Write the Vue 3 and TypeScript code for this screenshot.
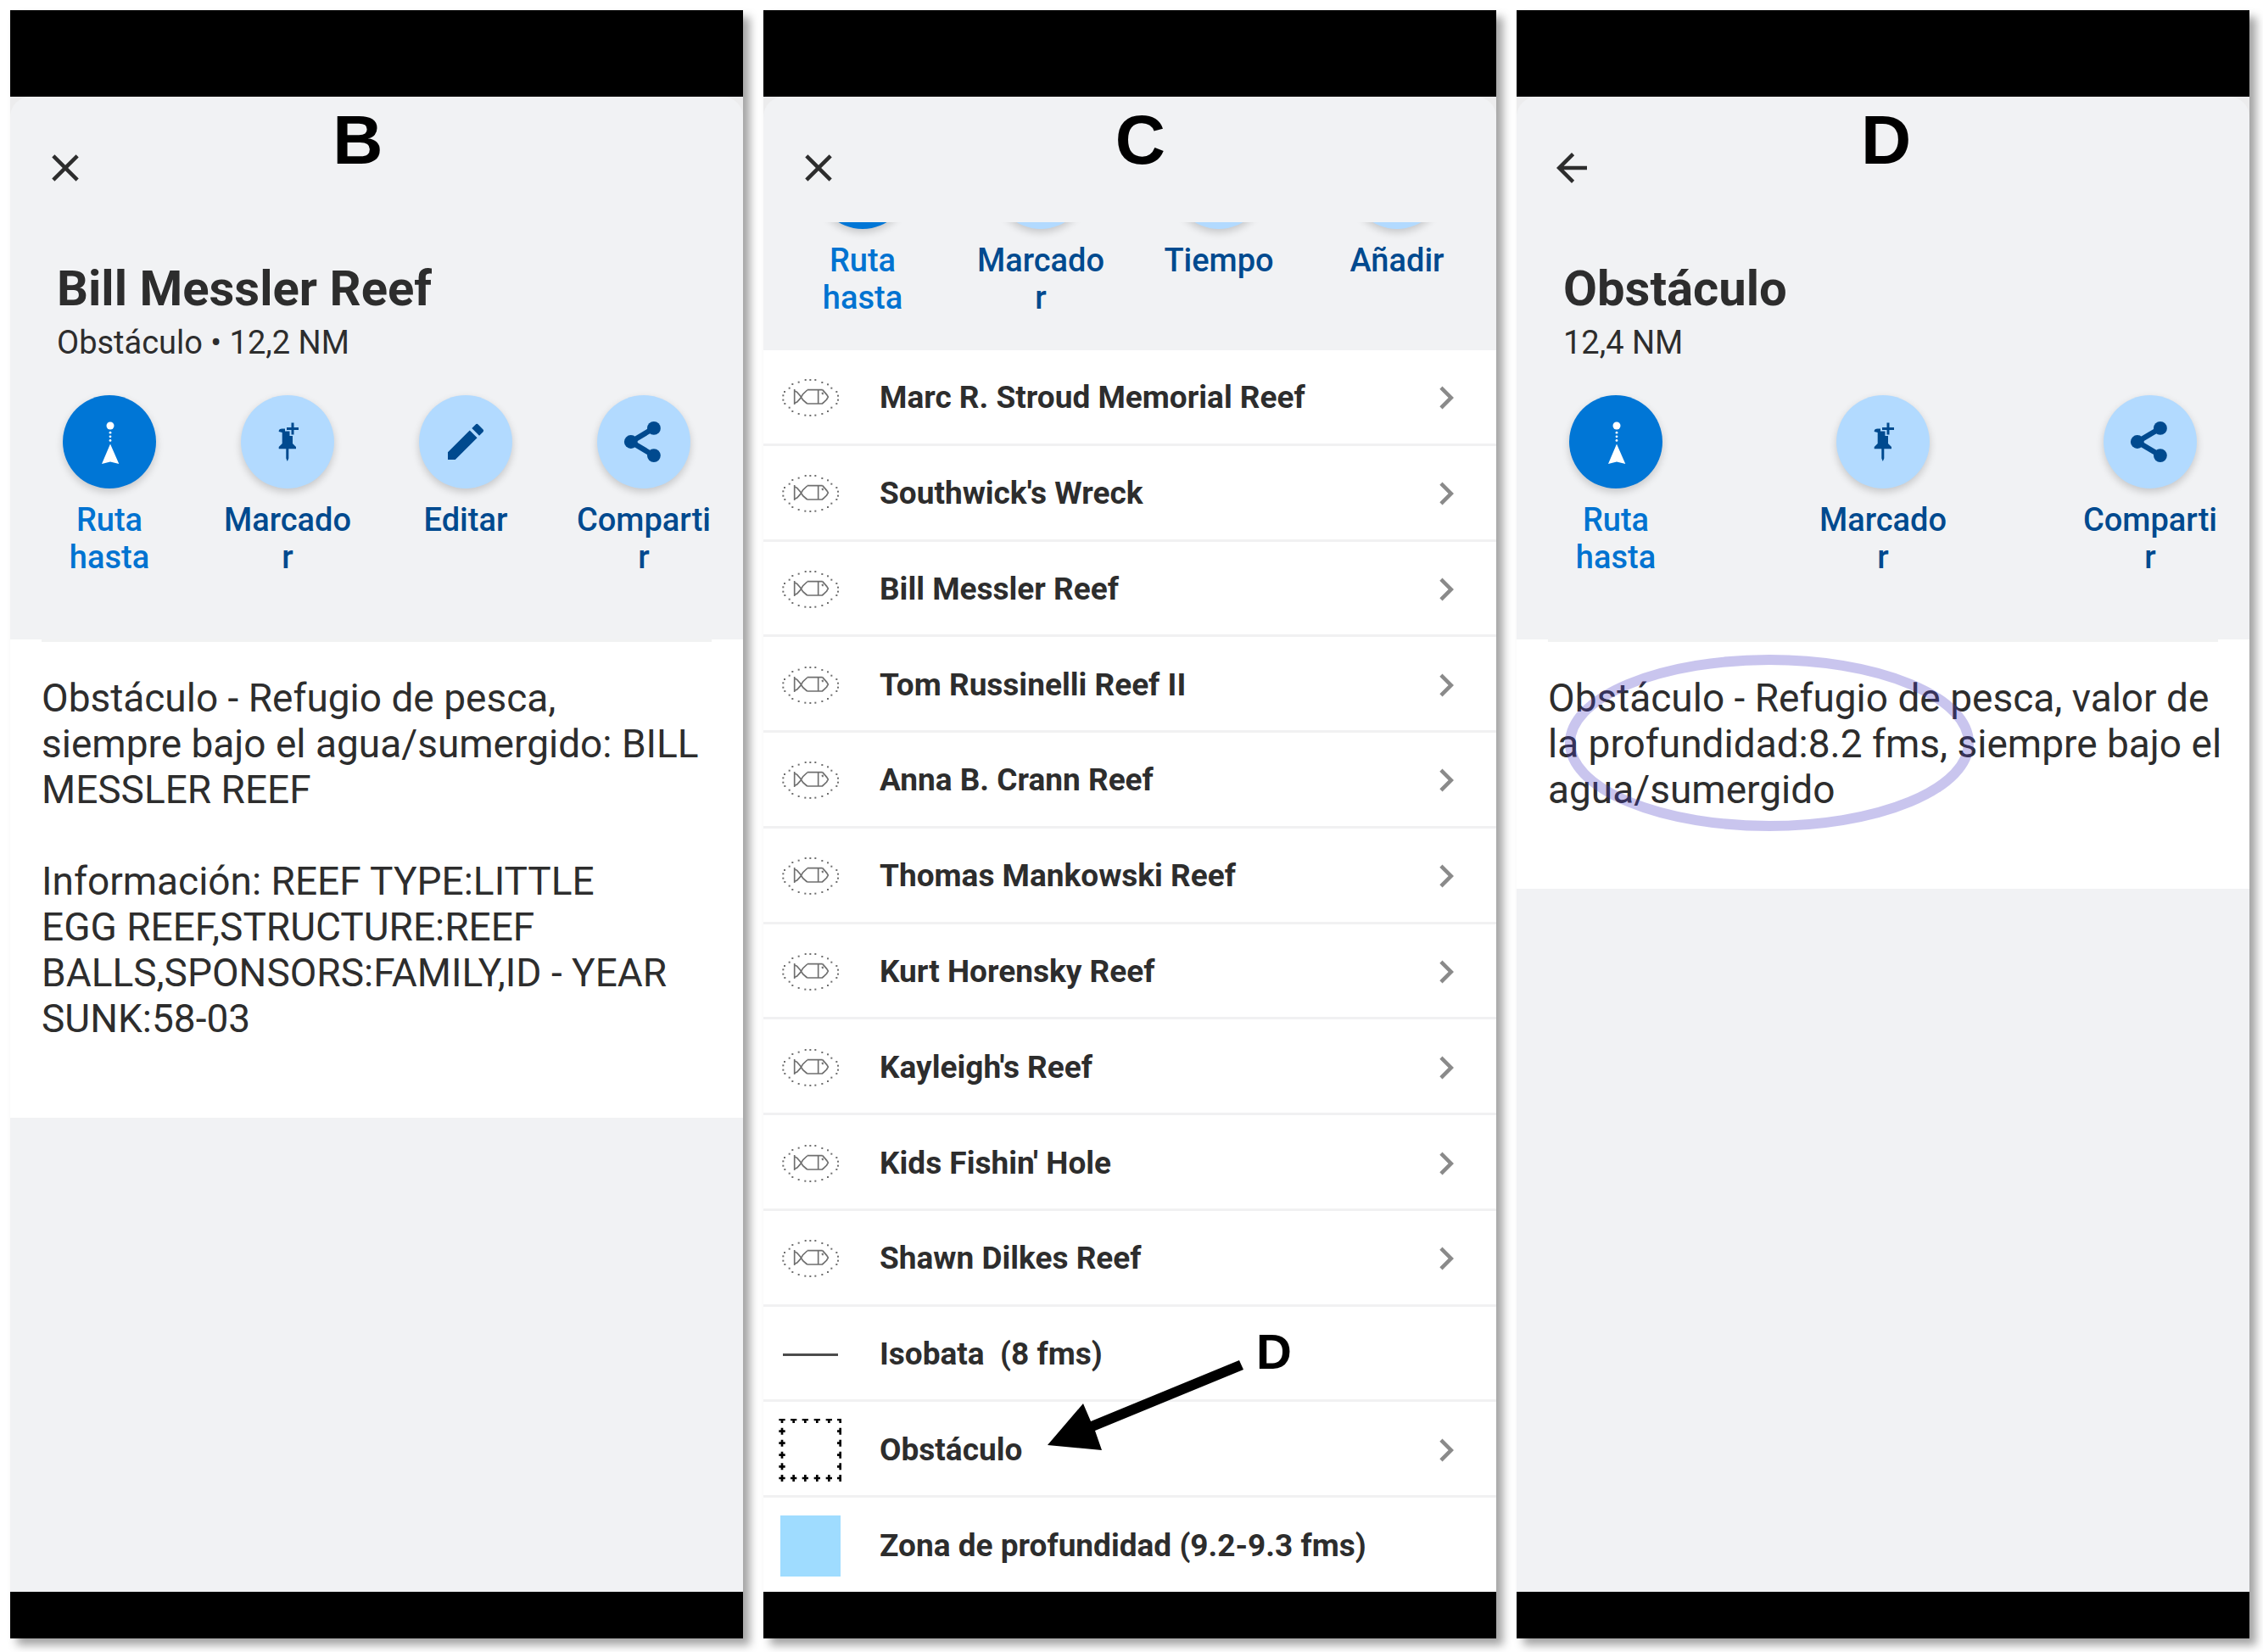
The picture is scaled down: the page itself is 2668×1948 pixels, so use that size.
<script setup lang="ts">
interface Action {
  icon: 'route' | 'pin' | 'edit' | 'share' | 'plain'
  label: string
  primary?: boolean
}
interface Item {
  name: string
  symbol: 'reef' | 'line' | 'area' | 'depth'
  link: boolean
  callout?: boolean
}
interface Panel {
  letter: string
  nav: 'close' | 'back'
  title?: string
  subtitle?: string
  actions: Action[]
  text?: string
  highlight?: boolean
  items?: Item[]
}

const reefs = [
  'Marc R. Stroud Memorial Reef',
  "Southwick's Wreck",
  'Bill Messler Reef',
  'Tom Russinelli Reef II',
  'Anna B. Crann Reef',
  'Thomas Mankowski Reef',
  'Kurt Horensky Reef',
  "Kayleigh's Reef",
  "Kids Fishin' Hole",
  'Shawn Dilkes Reef',
]

const route: Action = { icon: 'route', label: 'Ruta hasta', primary: true }
const marker: Action = { icon: 'pin', label: 'Marcador' }
const share: Action = { icon: 'share', label: 'Compartir' }

const panels: Panel[] = [
  {
    letter: 'B',
    nav: 'close',
    title: 'Bill Messler Reef',
    subtitle: 'Obstáculo • 12,2 NM',
    actions: [route, marker, { icon: 'edit', label: 'Editar' }, share],
    text: `Obstáculo - Refugio de pesca,
siempre bajo el agua/sumergido: BILL
MESSLER REEF

Información: REEF TYPE:LITTLE
EGG REEF,STRUCTURE:REEF
BALLS,SPONSORS:FAMILY,ID - YEAR
SUNK:58-03`,
  },
  {
    letter: 'C',
    nav: 'close',
    actions: [route, marker, { icon: 'plain', label: 'Tiempo' }, { icon: 'plain', label: 'Añadir' }],
    items: [
      ...reefs.map((name): Item => ({ name, symbol: 'reef', link: true })),
      { name: 'Isobata  (8 fms)', symbol: 'line', link: false },
      { name: 'Obstáculo', symbol: 'area', link: true, callout: true },
      { name: 'Zona de profundidad (9.2-9.3 fms)', symbol: 'depth', link: false },
    ],
  },
  {
    letter: 'D',
    nav: 'back',
    title: 'Obstáculo',
    subtitle: '12,4 NM',
    actions: [route, marker, share],
    text: `Obstáculo - Refugio de pesca, valor de
la profundidad:8.2 fms, siempre bajo el
agua/sumergido`,
    highlight: true,
  },
]

// Dots of the ellipse round the reef symbol
const dots: [number, number][] = [
  [150, 51], [167, 51], [185, 51], [126, 59], [209, 60], [104, 66], [229, 67],
  [93, 80], [242, 80], [76, 93], [260, 93], [71, 106], [265, 107], [71, 122],
  [265, 122], [77, 135], [260, 135], [93, 149], [242, 149], [104, 162],
  [229, 162], [126, 171], [209, 171], [149, 176], [167, 177], [185, 176],
]

// Crosses along the border of the obstruction area symbol
const xs = [66, 107, 148, 190, 232, 272]
const ys = [99, 140, 182, 224, 265, 306]
const crosses: [number, number][] = xs.flatMap((x, i) =>
  ys.filter((_, j) => i === 0 || i === 5 || j === 0 || j === 5).map((y): [number, number] => [x, y]),
)
</script>

<template>
  <main class="board">
    <section v-for="panel in panels" :key="panel.letter" class="panel">
      <div class="status"></div>
      <div class="sheet">
        <div class="appbar">
          <button class="nav" type="button" :aria-label="panel.nav === 'close' ? 'Cerrar' : 'Atrás'">
            <svg viewBox="0 0 24 24">
              <path
                v-if="panel.nav === 'close'"
                d="M19 6.41 17.59 5 12 10.59 6.41 5 5 6.41 10.59 12 5 17.59 6.41 19 12 13.41 17.59 19 19 17.59 13.41 12z"
              />
              <path v-else d="M20 11H7.83l5.59-5.59L12 4l-8 8 8 8 1.41-1.41L7.83 13H20v-2z" />
            </svg>
          </button>
          <span class="letter" :class="'letter-' + panel.letter">{{ panel.letter }}</span>
        </div>

        <header class="head" :class="{ scrolled: !panel.title }">
          <template v-if="panel.title">
            <h1>{{ panel.title }}</h1>
            <p class="subtitle">{{ panel.subtitle }}</p>
          </template>
          <div class="actions">
            <button
              v-for="action in panel.actions"
              :key="action.label"
              class="action"
              :class="{ primary: action.primary }"
              type="button"
            >
              <span class="disc">
                <svg v-if="action.icon === 'route'" viewBox="0 0 56 56">
                  <circle cx="29" cy="9" r="4.5" />
                  <circle cx="29" cy="17.2" r="1.4" />
                  <circle cx="29" cy="21.8" r="1.4" />
                  <circle cx="29" cy="26.4" r="1.4" />
                  <path d="M29 30.500 39.300 54 29 51.500 19 54z" />
                </svg>
                <svg v-else-if="action.icon === 'pin'" viewBox="0 0 56 56">
                  <path
                    d="M32.500 5.500h3v5.500h5.500v3h-5.500v5.500h-3V14H27v-3h5.500zM17.700 16q-.3-3.500 4-3.500h3.300v3h5.500v5.500H34v9l4 4v2.200H17.700V34l4-4V17zM26.300 36h3v11.500l-1.500 3.500-1.500-3.500z"
                  />
                </svg>
                <svg v-else-if="action.icon === 'edit'" viewBox="0 0 24 24">
                  <path
                    d="M3 17.250V21h3.750L17.810 9.940l-3.750-3.750L3 17.250zM20.710 7.040a1 1 0 0 0 0-1.410l-2.340-2.340a1 1 0 0 0-1.410 0l-1.830 1.830 3.750 3.750 1.830-1.830z"
                  />
                </svg>
                <svg v-else-if="action.icon === 'share'" viewBox="0 0 24 24">
                  <path d="M17.100 5.100 5.500 12l11.600 6.900" fill="none" stroke="currentColor" stroke-width="2.700" />
                  <circle cx="17.100" cy="5.100" r="3.400" />
                  <circle cx="5.500" cy="12" r="3.400" />
                  <circle cx="17.100" cy="18.900" r="3.400" />
                </svg>
              </span>
              <span class="caption">{{ action.label }}</span>
            </button>
          </div>
        </header>

        <article v-if="panel.text" class="details">
          <p>{{ panel.text }}</p>
          <svg v-if="panel.highlight" class="highlight" viewBox="0 0 482 208">
            <ellipse cx="241" cy="104" rx="235" ry="98" />
          </svg>
        </article>

        <ul v-if="panel.items" class="list">
          <li v-for="item in panel.items" :key="item.name" class="row">
            <span class="symbol">
              <svg v-if="item.symbol === 'reef'" class="reef" viewBox="58 42 216 144">
                <rect v-for="(d, i) in dots" :key="i" :x="d[0] - 3" :y="d[1] - 3" width="6" height="6" />
                <path
                  d="M111 84v54M195 86v48M156 86h54M156 135h54M112 90l8 4 12 14 9 14 15 13M112 133l8-4 12-13 9-15 15-14M210 86l8 9 7 8 5 8-5 9-8 8-8 7M207 98h4v5"
                />
              </svg>
              <span v-else-if="item.symbol === 'line'" class="isobath"></span>
              <svg v-else-if="item.symbol === 'area'" class="area" viewBox="54 96 222 222">
                <path v-for="(c, i) in crosses" :key="i" :d="`M${c[0] - 11} ${c[1]}h22M${c[0]} ${c[1] - 12}v24`" />
              </svg>
              <span v-else class="depth"></span>
            </span>
            <span class="name">{{ item.name }}</span>
            <button v-if="item.link" class="open" type="button" :aria-label="item.name">
              <svg viewBox="0 0 24 24"><path d="M10 6 8.590 7.410 13.170 12l-4.580 4.590L10 18l6-6z" /></svg>
            </button>
            <span v-if="item.callout" class="callout">
              <svg viewBox="0 0 232 106"><path d="M0 100 42 51l9 21L226 0l5 11L56 83l8 23z" /></svg>
              <b>D</b>
            </span>
          </li>
        </ul>
      </div>
      <div class="navbar"></div>
    </section>
  </main>
</template>

<style>
body {
  margin: 0;
  background: #fff;
}
</style>

<style scoped>
.board {
  box-sizing: border-box;
  min-height: 100vh;
  padding: 12px 16px 16px 12px;
  display: grid;
  grid-template-columns: repeat(3, minmax(0, 1fr));
  gap: 24px;
  font-family: Roboto, sans-serif;
  color: #2d2d2d;
}
.panel {
  display: flex;
  flex-direction: column;
  background: #ececed;
  box-shadow: 8px 8px 10px rgba(0, 0, 0, 0.36);
}
.status {
  height: 102px;
  background: #000;
}
.navbar {
  height: 55px;
  background: #000;
}
.sheet {
  flex: 1;
  display: flex;
  flex-direction: column;
  background: #f1f2f4;
  border-radius: 24px 24px 0 0;
}
button {
  padding: 0;
  border: 0;
  background: none;
  color: inherit;
  font: inherit;
}
svg {
  display: block;
  fill: currentColor;
}
.appbar {
  position: relative;
  box-sizing: border-box;
  height: 148px;
  padding: 57px 38px 0;
}
.nav,
.nav svg,
.open,
.open svg {
  display: block;
  width: 54px;
  height: 54px;
}
.letter {
  position: absolute;
  top: 11px;
  font: bold 82px/80px "Liberation Sans", sans-serif;
  color: #000;
}
.letter-B {
  left: 44%;
}
.letter-C {
  left: 48%;
}
.letter-D {
  left: 47%;
}
.head {
  padding: 41px 37px 75px;
  overflow: clip;
}
.head.scrolled {
  padding-top: 0;
  padding-bottom: 40px;
}
.scrolled .actions {
  margin-top: -102px;
}
h1 {
  margin: 0 18px;
  font-size: 58px;
  line-height: 74px;
  font-weight: 700;
}
.subtitle {
  margin: 0 18px 35px;
  font-size: 38px;
  line-height: 54px;
}
.actions {
  display: flex;
  justify-content: space-between;
}
.action {
  width: 160px;
  display: flex;
  flex-direction: column;
  align-items: center;
  gap: 15px;
  color: #004a8f;
}
.disc {
  width: 110px;
  height: 110px;
  border-radius: 50%;
  display: grid;
  place-items: center;
  background: #b2daff;
  box-shadow: 0 4px 10px rgba(0, 0, 0, 0.18);
}
.disc svg {
  width: 56px;
  height: 56px;
}
.caption {
  width: 160px;
  min-height: 88px;
  font-size: 38px;
  line-height: 44px;
  font-weight: 500;
  overflow-wrap: anywhere;
}
.primary {
  color: #0073d1;
}
.primary .disc {
  background: #0076d6;
  color: #fff;
}
.details {
  position: relative;
  padding: 42px 24px 90px 37px;
  background: #fff;
}
.details::before {
  content: "";
  position: absolute;
  inset: 0 37px auto;
  height: 3px;
  background: #f1f2f2;
}
.details p {
  margin: 0;
  font-size: 46px;
  line-height: 54px;
  white-space: pre-line;
}
.highlight {
  position: absolute;
  left: 57px;
  top: 18px;
  width: 482px;
}
.highlight ellipse {
  fill: none;
  stroke: rgba(75, 62, 198, 0.3);
  stroke-width: 12;
}
.list {
  flex: 1;
  margin: 0;
  padding: 0;
  list-style: none;
  display: flex;
  flex-direction: column;
  background: #fff;
}
.row {
  position: relative;
  box-sizing: border-box;
  flex: 1 0 96px;
  padding: 3px 32px 0 18px;
  display: flex;
  align-items: center;
  gap: 45px;
  border-bottom: 3px solid #f1f1f2;
}
.row:last-child {
  flex-basis: 94px;
  border-bottom: 0;
}
.symbol {
  flex: none;
  width: 74px;
  display: grid;
  place-items: center;
}
.reef {
  width: 72px;
  height: 48px;
  color: #6f6f6f;
}
.reef path {
  fill: none;
  stroke: currentColor;
  stroke-width: 5;
}
.isobath {
  width: 65px;
  height: 3px;
  background: #4c4c4c;
}
.area {
  width: 74px;
  height: 74px;
}
.area path {
  stroke: #000;
  stroke-width: 8;
}
.depth {
  width: 71px;
  height: 72px;
  background: #9fdcff;
}
.name {
  flex: 1;
  font-size: 37px;
  line-height: 44px;
  font-weight: 700;
  white-space: pre;
}
.open {
  color: #8a8a8a;
}
.callout {
  position: absolute;
  left: 335px;
  top: -87px;
  display: flex;
  align-items: flex-start;
  gap: 14px;
  color: #000;
}
.callout svg {
  width: 232px;
  margin-top: 38px;
}
.callout b {
  font: bold 58px/56px "Liberation Sans", sans-serif;
}
</style>
